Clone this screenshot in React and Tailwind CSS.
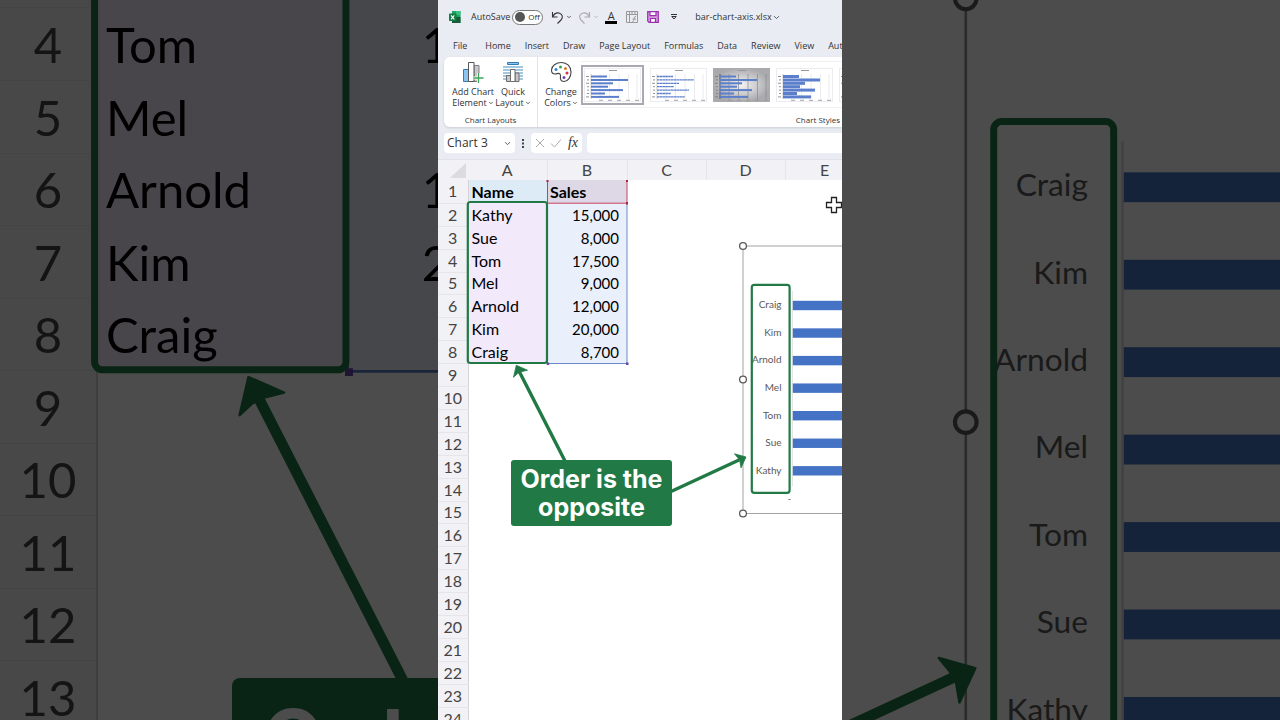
import React, { useState } from 'react'
import { ChevronDown } from 'lucide-react'

const people = [
     { name: 'Kathy', sales: '15,000' },
     { name: 'Sue', sales: '8,000' },
     { name: 'Tom', sales: '17,500' },
     { name: 'Mel', sales: '9,000' },
     { name: 'Arnold', sales: '12,000' },
     { name: 'Kim', sales: '20,000' },
     { name: 'Craig', sales: '8,700' },
]

const tabs = ['File', 'Home', 'Insert', 'Draw', 'Page Layout', 'Formulas', 'Data', 'Review', 'View', 'Automate']
const columns = ['A', 'B', 'C', 'D', 'E']

// Everything that floats above the cells, in workbook coordinates
const SheetObjects = ({ viewBox, className }) => (
     <svg viewBox={viewBox} preserveAspectRatio="xMinYMin slice" className={className}>
          {/* Range highlights */}
          <g fill="none" strokeWidth="0.9">
               <path d="M109.500 203.500V363.500H189V203.500" stroke="#5b7cc4" />
               <path d="M109.500 181V203.200H189V181" stroke="#c22f50" />
          </g>
          <path d="M188 202h2v2.500h-2zM108.500 180h2v2h-2zM188 180h2v2h-2z" fill="#b0203f" />
          <path d="M108.700 362.500h2.500v2.500h-2.500zM188 362.500h2.500v2.500h-2.500z" fill="#6a45a8" />

          {/* Embedded chart */}
          <rect x="305" y="246" width="300" height="267.500" fill="#fff" stroke="#8c8c8c" strokeWidth="0.8" />
          <path d="M354.400 291V486" stroke="#d9d9d9" strokeWidth="0.8" />
          {[...people].reverse().map((p, i) => (
               <g key={p.name}>
                    <rect x="354.800" y={300.8 + i * 27.55} width="60" height="9.400" fill="#4472c4" />
                    <text x="343.500" y={308.3 + i * 27.55} textAnchor="end" fontSize="10" fill="#595959">{p.name}</text>
               </g>
          ))}
          <text x="353" y="502" textAnchor="end" fontSize="9" fill="#595959">-</text>
          {[246, 379.5, 513.5].map(y => (
               <circle key={y} cx="305" cy={y} r="3.400" fill="#fff" stroke="#595959" strokeWidth="1.300" />
          ))}

          {/* Green frames and arrows */}
          <g fill="none" stroke="#217a45" strokeWidth="2.200">
               <rect x="29.800" y="202" width="79.200" height="161" rx="2.500" />
               <rect x="313.800" y="284.800" width="37.800" height="208" rx="2.500" />
               <path d="M81 371L127.500 462M233 491.500L301 460" strokeWidth="3.400" />
          </g>
          <path d="M78.300 365.300L89.500 370.200L83 371.800L79.500 373.600L75.500 377.300Z" fill="#217a45" stroke="#217a45" strokeWidth="0.800" strokeLinejoin="round" />
          <path d="M308 457L303 467.800L302 461.800L299.800 457.800L296.500 453.800Z" fill="#217a45" stroke="#217a45" strokeWidth="0.800" strokeLinejoin="round" />

          {/* Cell cursor */}
          <path d="M393.500 197.500h5v5h5v5h-5v5h-5v-5h-5v-5h5z" fill="#fff" stroke="#222" strokeWidth="1.300" />
     </svg>
)

const cellFill = (row, col) => {
     if (row === 1 && col === 0) return 'bg-[#ddebf7]'
     if (row === 1 && col === 1) return 'bg-[#ded8e6]'
     if (row > 1 && row <= 8 && col === 0) return 'bg-[#f2e9fb]'
     if (row > 1 && row <= 8 && col === 1) return 'bg-[#e9effb]'
     return ''
}

const Sheet = () => (
     <div className="relative flex-1 overflow-hidden bg-white">
          <table className="w-[426px] table-fixed border-collapse text-[16px] leading-[20px] text-black">
               <colgroup>
                    <col className="w-[30px]" />
                    <col className="w-[79px]" />
                    <col className="w-[80px]" />
                    <col className="w-[79px]" />
                    <col className="w-[79px]" />
                    <col className="w-[79px]" />
               </colgroup>
               <thead>
                    <tr className="h-[20px] bg-[#f2f1f5] text-[#444]">
                         <th className="p-0" aria-label="Select all">
                              <svg viewBox="0 0 30 20" className="h-[20px] w-[30px]"><path d="M28 3v15H12z" fill="#dcdbde" /></svg>
                         </th>
                         {columns.map(c => (
                              <th key={c} scope="col" className="border-r border-[#e6e5e9] p-0 font-normal">{c}</th>
                         ))}
                    </tr>
               </thead>
               <tbody>
                    {Array.from({ length: 24 }, (_, i) => i + 1).map(row => {
                         const person = people[row - 2]
                         return (
                              <tr key={row} className="h-[23px] nth-[10n+5]:h-[22px]">
                                   <th scope="row" className="border-r border-b border-r-[#d4d3d8] border-b-[#e6e5e9] bg-[#f2f1f5] p-0 font-normal text-[#444]">{row}</th>
                                   <td className={`py-0 pr-0 pl-[3px] ${row === 1 ? 'font-bold' : ''} ${cellFill(row, 0)}`}>
                                        {row === 1 ? 'Name' : person?.name}
                                   </td>
                                   <td className={`py-0 pr-2 pl-[3px] ${row === 1 ? 'font-bold' : 'text-right text-[15px]'} ${cellFill(row, 1)}`}>
                                        {row === 1 ? 'Sales' : person?.sales}
                                   </td>
                                   <td /><td /><td />
                              </tr>
                         )
                    })}
               </tbody>
          </table>
          <SheetObjects viewBox="0 160 404 560" className="pointer-events-none absolute top-0 left-0 h-[560px] w-[404px]" />
          <div className="absolute top-[300px] left-[73px] flex h-[66px] w-[161px] items-center justify-center rounded-[3px] bg-[#217a45] text-center font-['Inter'] text-[25px] leading-[28px] font-bold whitespace-nowrap text-white">
               Order is the<br />opposite
          </div>
     </div>
)

const ChartThumb = ({ fill = '#5b7fcb', thick = 2, dark = false, dashed = false }) => (
     <svg viewBox="0 0 57 34" className="h-[34px] w-[57px] shrink-0">
          {dark && (
               <>
                    <defs>
                         <radialGradient id="thumbShade">
                              <stop offset="0" stopColor="#f4f4f4" />
                              <stop offset="1" stopColor="#aaa9ad" />
                         </radialGradient>
                    </defs>
                    <rect width="57" height="34" fill="url(#thumbShade)" />
               </>
          )}
          {!dark && <rect x="0.5" y="0.5" width="56" height="33" fill="#fff" stroke="#ececf0" />}
          <path d="M16 6v25M25.500 6v25M35 6v25M44.500 6v25M53 6v25" stroke={dark ? '#8a8a8e' : '#e2e2e8'} strokeWidth="0.700" />
          <path d="M7 6v25" stroke={dark ? '#333' : '#bbb'} strokeWidth="0.700" />
          <path d="M25 2.500h8" stroke="#999" strokeWidth="1" />
          {[16, 37, 22, 17, 32, 14, 28].map((w, i) => (
               <path
                    key={i}
                    d={`M7 ${8.5 + i * 3.4}h${w}`}
                    stroke={fill}
                    strokeWidth={thick}
                    strokeDasharray={dashed ? '2.500 0.300' : undefined}
               />
          ))}
          <path d="M2 8.500h3M3 11.900h2M2 15.300h3M3 18.700h2M3 22.100h2M3 25.500h2M2 28.900h3" stroke="#777" strokeWidth="0.800" />
          <path d="M15 32.300h4M24 32.300h4M33 32.300h4M42 32.300h4M51 32.300h4" stroke="#999" strokeWidth="0.900" />
     </svg>
)

const AddChartIcon = () => (
     <svg viewBox="0 0 22 22" className="h-[22px] w-[22px]">
          <path d="M1.500 8.500h5v12h-5z" fill="#8cc4ef" stroke="#2f7cb8" />
          <path d="M12 4.500h5v16h-5z" fill="#c8c8ca" stroke="#808084" />
          <path d="M6.500 1.500h5.500v19H6.500z" fill="#fff" stroke="#555" />
          <path d="M16.500 12v10M11.500 17h10" stroke="#fff" strokeWidth="3" />
          <path d="M16.500 12v10M11.500 17h10" stroke="#3aa757" strokeWidth="1.300" />
     </svg>
)

const QuickLayoutIcon = () => (
     <svg viewBox="0 0 22 22" className="h-[22px] w-[22px]">
          <path d="M5.500 1.500h11v2h-11z" fill="#8cc4ef" stroke="#2f7cb8" />
          <path d="M1 6h20M1 9h20M1 12h20M1 15h20M1 18h20" stroke="#4a90c4" strokeWidth="1.200" />
          <path d="M4.500 14.500h4v6h-4zM13 12h4v8.500h-4z" fill="#c8c8ca" stroke="#6d6d70" />
          <path d="M8.500 8.500H13v12H8.500z" fill="#fff" stroke="#6d6d70" />
     </svg>
)

const PaletteIcon = () => (
     <svg viewBox="0 0 22 22" className="h-[22px] w-[22px]">
          <path d="M11.500 1.500C6 1.500 1.500 5 1.500 9c0 2.500 1.500 4 3.500 4s3.500-1.500 5 0c1.200 1.300 0 3.200.5 5 .4 1.800 2 2.500 3.500 2.500 4 0 7-4.500 7-9.500 0-5.500-4-9.500-9.500-9.500z" fill="#fff" stroke="#444" strokeWidth="1.100" />
          <circle cx="6" cy="8.500" r="1.500" fill="#2f86d0" />
          <circle cx="10.500" cy="6" r="1.500" fill="#35a853" />
          <circle cx="15.500" cy="7.500" r="1.500" fill="#e8742c" />
          <circle cx="17" cy="12" r="1.500" fill="#d83048" />
          <circle cx="14" cy="16.500" r="1.500" fill="#7b3fb0" />
     </svg>
)

const RibbonButton = ({ icon, top, bottom }) => (
     <button className="flex w-10 flex-col items-center whitespace-nowrap">
          {icon}
          <span className="mt-[3px] leading-[11px]">{top}</span>
          <span className="flex items-center gap-px leading-[11px]">{bottom}<ChevronDown size={6} strokeWidth={3} /></span>
     </button>
)

const TitleBar = () => {
     const [autoSave, setAutoSave] = useState(false)
     return (
          <div className="flex h-[34px] shrink-0 items-center pl-[11px] text-[9px] text-[#333]">
               <svg viewBox="0 0 12 12" className="h-3 w-3 shrink-0">
                    <path d="M3 0h8.500v12H3z" fill="#21a366" />
                    <path d="M7 0h4.500v4H7z" fill="#33c481" />
                    <path d="M3 6h8.500v6H3z" fill="#185c37" />
                    <rect y="2.500" width="7.500" height="7.500" rx="0.800" fill="#107c41" />
                    <path d="M2 4.300l3.300 4M5.300 4.300L2 8.300" stroke="#fff" strokeWidth="1.100" />
               </svg>
               <label className="relative ml-[10px] flex shrink-0 items-center gap-[2px] whitespace-nowrap">
                    AutoSave
                    <input type="checkbox" role="switch" className="sr-only" checked={autoSave} onChange={e => setAutoSave(e.target.checked)} />
                    <span className="flex h-[15px] w-[31px] items-center gap-[3px] rounded-full border border-[#777] bg-white pl-[2px] text-[8px]">
                         <span className="h-[10px] w-[10px] rounded-full bg-[#555]" />
                         {autoSave ? 'On' : 'Off'}
                    </span>
               </label>
               <button aria-label="Undo" className="ml-2 flex items-center gap-[2px]">
                    <svg viewBox="0 0 13 13" className="h-[13px] w-[13px]" fill="none" stroke="#333" strokeWidth="1.100"><path d="M1.500 1v5h5M1.500 6C3 3 5.500 1.500 8 2c3.500.8 4.500 4.500 2 7L6.500 12.500" /></svg>
                    <ChevronDown size={6} strokeWidth={3} />
               </button>
               <button aria-label="Redo" className="ml-[6px] flex items-center gap-[2px] text-[#aaa]">
                    <svg viewBox="0 0 13 13" className="h-[13px] w-[13px]" fill="none" stroke="#aaa" strokeWidth="1.100"><path d="M11.500 1v5h-5M11.500 6C10 3 7.500 1.500 5 2c-3.500.8-4.500 4.500-2 7l3.500 3.500" /></svg>
                    <ChevronDown size={6} strokeWidth={3} />
               </button>
               <button className="ml-[6px] h-[13px] w-[12px] border-b-[3px] border-black text-[11px] leading-[9px]">A</button>
               <button aria-label="Format" className="ml-[9px]">
                    <svg viewBox="0 0 12 12" className="h-3 w-3" fill="none" stroke="#999" strokeWidth="1"><path d="M.5.500h11v11H.500zM.5 3.500h11M3.500.5v11M6 .5v3M9 .5v3" /><path d="M10 5.500c-1.500-.3-1.700.5-2 2.500s-.5 2.500-1.500 2.500M6.500 8H10" /></svg>
               </button>
               <button aria-label="Save" className="ml-[9px]">
                    <svg viewBox="0 0 12 12" className="h-3 w-3" fill="#d79be0" stroke="#9a2fae" strokeWidth="1.200"><path d="M.7.700h10.600v10.600H2L.7 10z" /><path d="M3 .7h6v4H3zM3.500 7.500h5v3.800h-5z" fill="#fff" /></svg>
               </button>
               <button aria-label="Customize toolbar" className="ml-3">
                    <svg viewBox="0 0 6 6" className="h-[6px] w-[6px]" fill="none" stroke="#333"><path d="M0 .500h6M.8 2.500h4.400L3 5z" /></svg>
               </button>
               <button className="ml-[18px] flex shrink-0 items-center whitespace-nowrap">bar-chart-axis.xlsx<ChevronDown size={9} /></button>
          </div>
     )
}

const Workbook = () => (
     <main className="flex h-full flex-col overflow-hidden bg-[#e9ecf3] font-['Open_Sans',sans-serif] text-[#333]">
          <TitleBar />

          <nav className="flex h-[23px] shrink-0 items-center gap-[14px] overflow-hidden pl-[15px] text-[9px]">
               {tabs.map(tab => (
                    <button key={tab} className="shrink-0 whitespace-nowrap first:mr-1">{tab}</button>
               ))}
          </nav>

          {/* Ribbon */}
          <div className="ml-[6px] flex h-[70px] shrink-0 rounded-l-md bg-white text-[9px] shadow-sm">
               <div className="flex w-[94px] shrink-0 flex-col items-center justify-between border-r border-[#e4e4e8] pt-1 pb-[1px]">
                    <div className="flex self-start pl-[9px]">
                         <RibbonButton icon={<AddChartIcon />} top="Add Chart" bottom="Element" />
                         <RibbonButton icon={<QuickLayoutIcon />} top="Quick" bottom="Layout" />
                    </div>
                    <span className="text-[8px] leading-3">Chart Layouts</span>
               </div>
               <div className="flex min-w-0 flex-1 flex-col justify-between pt-1 pb-[1px] pl-[3px]">
                    <div className="flex">
                         <RibbonButton icon={<PaletteIcon />} top="Change" bottom="Colors" />
                         <div className="flex min-w-0 flex-1 items-center gap-[6px] overflow-hidden border-y border-[#f0f0f3]">
                              <button aria-label="Style 1" className="shrink-0 border-2 border-[#a9a9b2] p-px"><ChartThumb /></button>
                              <button aria-label="Style 2" className="shrink-0"><ChartThumb dashed thick={1.3} /></button>
                              <button aria-label="Style 3" className="shrink-0"><ChartThumb dark /></button>
                              <button aria-label="Style 4" className="shrink-0"><ChartThumb thick={3} /></button>
                              <button aria-label="Style 5" className="shrink-0"><ChartThumb /></button>
                         </div>
                    </div>
                    <span className="self-end pr-[2px] text-[8px] leading-3">Chart Styles</span>
               </div>
          </div>

          {/* Formula bar */}
          <div className="my-[6px] ml-[6px] flex h-5 shrink-0 items-center">
               <div className="relative flex h-full">
                    <select aria-label="Name box" className="block h-full w-[71px] appearance-none rounded-sm bg-white pl-[3px] text-[12px] leading-5">
                         <option>Chart 3</option>
                    </select>
                    <ChevronDown size={9} className="pointer-events-none absolute top-[6px] right-[3px]" />
               </div>
               <svg viewBox="0 0 16 20" className="h-5 w-4 shrink-0" fill="#444"><path d="M7 6h2v2H7zM7 9.500h2v2H7zM7 13h2v2H7z" /></svg>
               <div className="flex h-full w-[51px] items-center justify-between rounded-sm bg-white px-1">
                    <button aria-label="Cancel"><svg viewBox="0 0 10 10" className="h-[10px] w-[10px]" stroke="#aaa"><path d="M1 1l8 8M9 1L1 9" /></svg></button>
                    <button aria-label="Enter"><svg viewBox="0 0 12 10" className="h-[10px] w-3" fill="none" stroke="#aaa"><path d="M1 5.500L4.500 9 11 1.500" /></svg></button>
                    <button className="font-['Liberation_Serif',serif] text-[14px] leading-5 italic">fx</button>
               </div>
               <input aria-label="Formula" className="ml-[5px] h-full min-w-0 flex-1 rounded-l-sm bg-white px-2 text-[12px]" />
          </div>
          <div className="flex flex-1 flex-col overflow-hidden border-t border-[#e2e3e8] font-['Lato',sans-serif]">
               <Sheet />
          </div>
     </main>
)

// Magnified rows 4 to 13 behind the workbook
const BackdropRows = () => (
     <aside className="relative min-w-0 flex-1 overflow-hidden bg-white">
          <table className="mt-2 w-[601px] table-fixed border-collapse text-[49px] leading-[60px] text-black">
               <colgroup>
                    <col className="w-[97px]" />
                    <col className="w-[252px]" />
                    <col className="w-[252px]" />
               </colgroup>
               <tbody>
                    {Array.from({ length: 10 }, (_, i) => i + 4).map(row => {
                         const person = people[row - 2]
                         return (
                              <tr key={row} className="odd:h-[72px] even:h-[73px]">
                                   <th scope="row" className="border-r-2 border-b border-r-[#cfcfd2] border-b-[#e4e3e7] bg-[#f2f1f5] p-0 font-normal text-[#444]">{row}</th>
                                   <td className={`py-0 pr-0 pl-2 ${cellFill(row, 0)}`}>{person?.name}</td>
                                   <td className={`py-0 pr-[26px] pl-0 text-right ${cellFill(row, 1)}`}>{person?.sales}</td>
                              </tr>
                         )
                    })}
               </tbody>
          </table>
          <div className="absolute top-0 left-0 flex h-2 w-[601px]">
               <span className="w-[97px] border-b border-[#e4e3e7] bg-[#f2f1f5]" />
               <span className="w-[252px] bg-[#f2e9fb]" />
               <span className="w-[252px] bg-[#e9effb]" />
          </div>
          <SheetObjects viewBox="0 246.500 138 227" className="absolute top-0 left-0 h-[720px] w-[438px]" />
          <div className="absolute top-[678px] left-[232px] w-[510px] rounded-lg bg-[#217a45] pt-[15px] text-center font-['Inter'] text-[79px] leading-[88px] font-bold whitespace-nowrap text-white">
               Order is the<br />opposite
          </div>
          <div className="absolute inset-0 bg-black/70" />
     </aside>
)

const BackdropChart = () => (
     <aside className="relative min-w-0 flex-1 overflow-hidden bg-white">
          <SheetObjects viewBox="266 246.500 138 227" className="h-full w-full" />
          <div className="absolute inset-0 bg-black/70" />
     </aside>
)

const App = () => (
     <div className="flex h-screen overflow-hidden bg-[#4c4c4c] font-['Lato',sans-serif]">
          <BackdropRows />
          <div className="aspect-[101/180] h-full min-w-0 shrink-0">
               <Workbook />
          </div>
          <BackdropChart />
     </div>
)

export default App
